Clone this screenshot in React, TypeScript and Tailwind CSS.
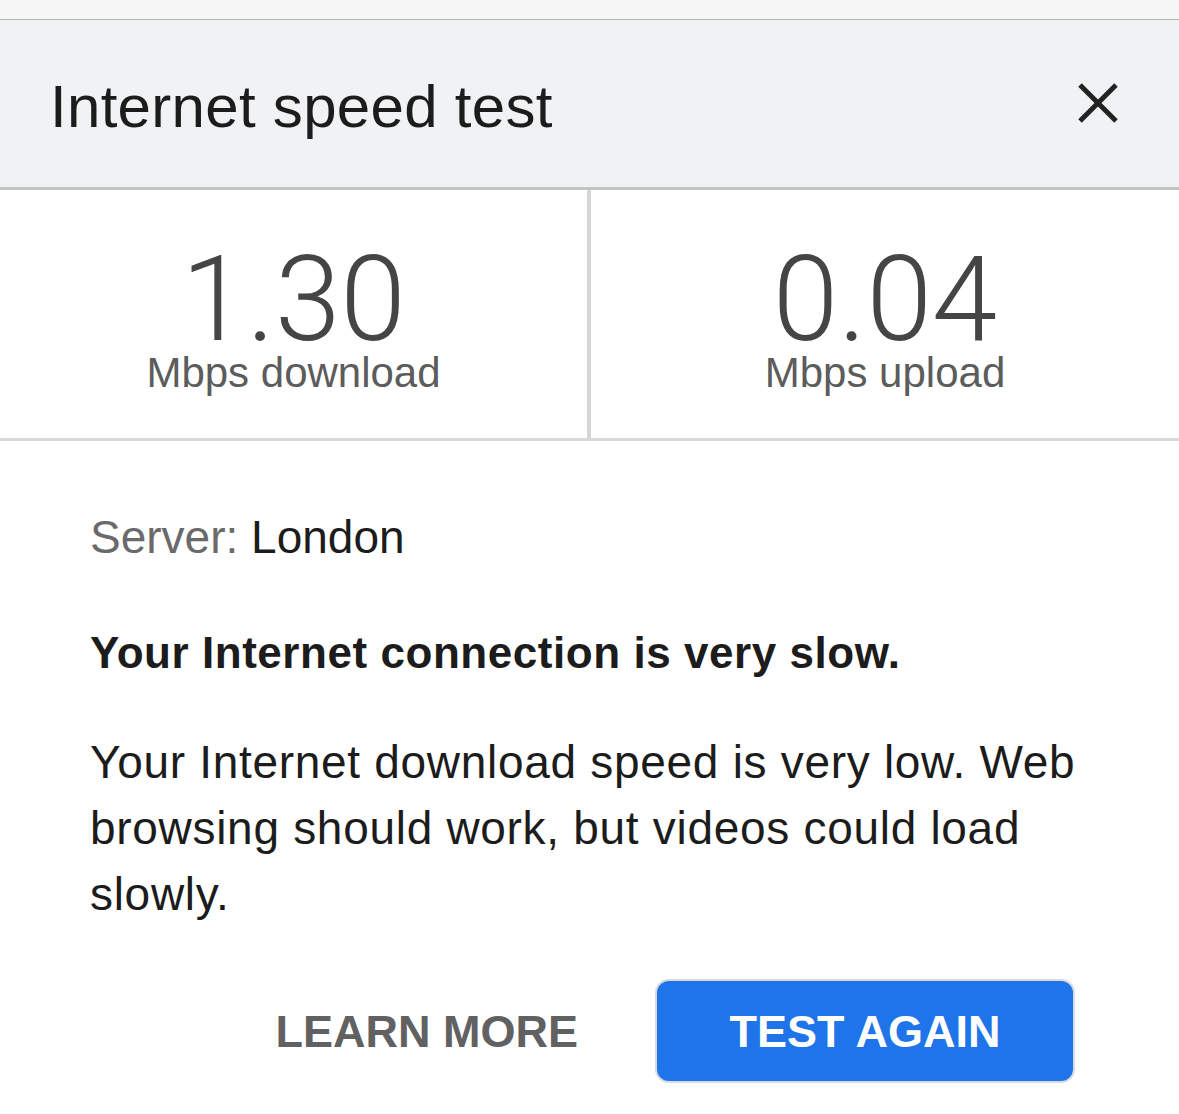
const font = "font-['Liberation_Sans',Arial,sans-serif]";

const CloseIcon = () => (
  <svg viewBox="0 0 42 42" className="h-[42px] w-[42px]" fill="none" stroke="#222" strokeWidth="5">
    <path d="M3 3l36 36" />
    <path d="M39 3L3 39" />
  </svg>
);

const Stat = ({ value, label }: { value: string; label: string }) => (
  <div className="flex flex-col items-center pt-[58px]">
    <span className="font-['Roboto',sans-serif] text-[118px] font-light leading-[104px] text-[#454545]">{value}</span>
    <span className="text-[42px] leading-none text-[#5c5c5c]">{label}</span>
  </div>
);

export default function App() {
  return (
    <div className={`${font} min-h-[1114px] w-[1179px] bg-white`}>
      <div className="h-[20px] border-b border-[#b3b3b3] bg-[#f7f7f7]" />

      <div className="flex h-[170px] items-start justify-between border-b-[3px] border-[#c3c3c3] bg-[#f1f2f4] pl-[50px] pr-[60px] pt-[57px]">
        <h1 className="text-[60px] leading-none tracking-[0.3px] text-[#1c1c1c]">Internet speed test</h1>
        <div className="pt-[5px]">
          <CloseIcon />
        </div>
      </div>

      <div className="flex h-[251px] border-b-[3px] border-[#d9d9d9]">
        <div className="w-[591px] border-r-4 border-[#d6d6d6]">
          <Stat value="1.30" label="Mbps download" />
        </div>
        <div className="flex-1">
          <Stat value="0.04" label="Mbps upload" />
        </div>
      </div>

      <div className="px-[90px] pt-[73px]">
        <p className="text-[46px] leading-none">
          <span className="text-[#6a6a6a]">Server: </span>
          <span className="text-[#1c1c1c]">London</span>
        </p>

        <p className="mt-[71px] text-[44px] font-bold leading-none tracking-[0.55px] text-[#1c1c1c]">
          Your Internet connection is very slow.
        </p>

        <p className="mt-[54px] text-[46px] leading-[66px] tracking-[0.7px] text-[#1c1c1c]">
          Your Internet download speed is very low. Web browsing should work, but videos could load slowly.
        </p>

        <div className="mr-[14px] mt-[52px] flex items-center justify-end gap-[77px]">
          <button className="text-[45px] font-bold leading-none text-[#616161]">LEARN MORE</button>
          <button className="flex h-[104px] w-[420px] items-center justify-center rounded-[14px] border-2 border-[#d6dae2] bg-[#1e74e8] text-[45px] font-bold leading-none text-white">
            TEST AGAIN
          </button>
        </div>
      </div>
    </div>
  );
}
